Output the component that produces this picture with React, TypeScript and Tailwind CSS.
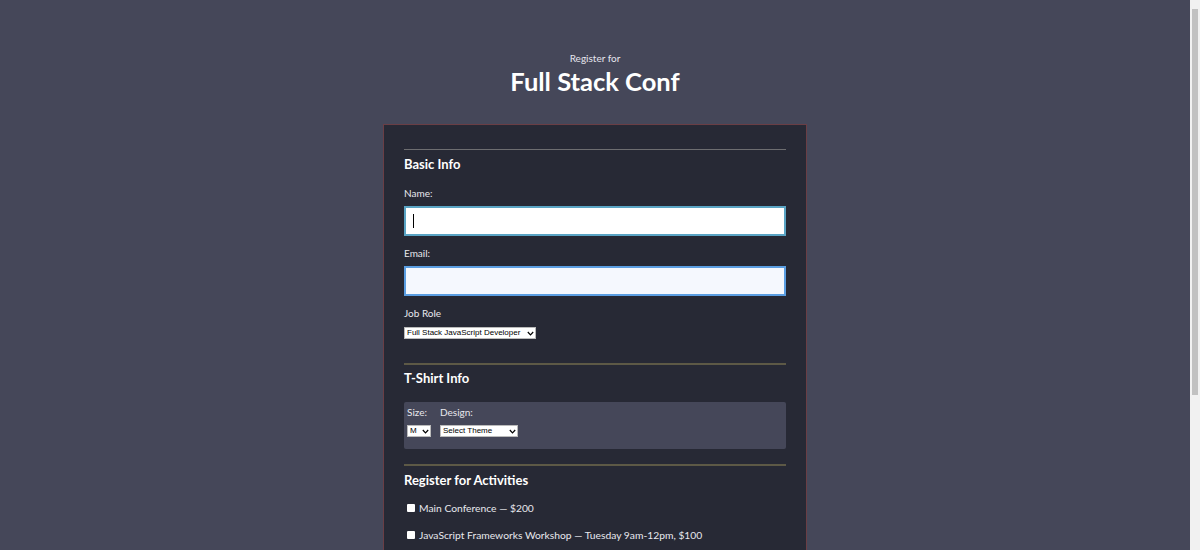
import React from "react";

const font = { fontFamily: "Lato, 'Noto Sans', sans-serif" };
const selFont = { fontFamily: "'Liberation Sans', Arial, sans-serif" };

function Chevron() {
  return (
    <svg width="7" height="5" viewBox="0 0 7 5">
      <path d="M0.8 1 L3.5 3.8 L6.2 1" fill="none" stroke="black" strokeWidth="1.2" />
    </svg>
  );
}

function Check({ children }: { children: React.ReactNode }) {
  return (
    <label className="flex items-center gap-[4px]">
      <span className="h-[8px] w-[8px] rounded-[1px] bg-white" />
      {children}
    </label>
  );
}

export default function App() {
  return (
    <div className="flex h-[550px] overflow-hidden bg-[#454759] text-white" style={font}>
      <main className="flex-1">
        <header className="flex flex-col items-center pt-[52px]">
          <p className="text-[10px] leading-[12px] text-[#e6e6ee]">Register for</p>
          <h1 className="mt-[3px] text-[25.5px] leading-[28px] font-bold">Full Stack Conf</h1>
        </header>
        <form className="mx-auto mt-[29px] w-[424px] border border-[#6a3e45] bg-[#272935] px-[20px] pt-[24px] pb-[40px]">
          <fieldset>
            <div className="h-px bg-[#6d6d70]" />
            <h2 className="mt-[6px] text-[13px] leading-[16px] font-bold">Basic Info</h2>
            <label className="mt-[15px] block text-[10px] leading-[12px] text-[#e8e8ee]">Name:</label>
            <div className="mt-[7px] flex h-[30px] items-center border-2 border-[#5aa4c4] bg-white px-[7px]">
              <span className="h-[14px] w-px bg-black" />
            </div>
            <label className="mt-[11px] block text-[10px] leading-[12px] text-[#e8e8ee]">Email:</label>
            <div className="mt-[7px] h-[30px] border-2 border-[#5b9ee2] bg-[#f5f8fe]" />
            <label className="mt-[11px] block text-[10px] leading-[12px] text-[#e8e8ee]">Job Role</label>
            <div
              className="mt-[8px] flex h-[12px] w-[132px] items-center justify-between border border-[#bbb] bg-white pl-[2px] pr-[1px] text-[8px] leading-[10px] text-black"
              style={selFont}
            >
              <span>Full Stack JavaScript Developer</span>
              <Chevron />
            </div>
          </fieldset>
          <fieldset className="mt-[24px]">
            <div className="h-[2px] bg-[#5d5946]" />
            <h2 className="mt-[5px] text-[13px] leading-[16px] font-bold">T-Shirt Info</h2>
            <div className="mt-[16px] flex h-[47px] gap-[9px] rounded-[2px] bg-[#454759] px-[3px] pt-[4px]">
              <div>
                <label className="block text-[10px] leading-[12px] text-[#e8e8ee]">Size:</label>
                <div
                  className="mt-[7px] flex h-[12px] w-[24px] items-center justify-between border border-[#bbb] bg-white pl-[2px] pr-[1px] text-[8px] leading-[10px] text-black"
                  style={selFont}
                >
                  <span>M</span>
                  <Chevron />
                </div>
              </div>
              <div>
                <label className="block text-[10px] leading-[12px] text-[#e8e8ee]">Design:</label>
                <div
                  className="mt-[7px] flex h-[12px] w-[78px] items-center justify-between border border-[#bbb] bg-white pl-[2px] pr-[1px] text-[8px] leading-[10px] text-black"
                  style={selFont}
                >
                  <span>Select Theme</span>
                  <Chevron />
                </div>
              </div>
            </div>
          </fieldset>
          <fieldset className="mt-[15px]">
            <div className="h-[2px] bg-[#5d5946]" />
            <h2 className="mt-[6px] text-[13px] leading-[16px] font-bold">Register for Activities</h2>
            <div className="mt-[14px] flex flex-col gap-[15px] pl-[3px] text-[10.3px] leading-[12px] text-[#e8e8ee]">
              <Check>Main Conference — $200</Check>
              <Check>JavaScript Frameworks Workshop — Tuesday 9am-12pm, $100</Check>
              <Check>JavaScript Libraries Workshop — Tuesday 1pm-4pm, $100</Check>
              <Check>Express Workshop — Tuesday 9am-12pm, $100</Check>
            </div>
          </fieldset>
        </form>
      </main>
      <aside className="flex w-[10px] shrink-0 flex-col bg-[#f1f1f1] px-[2px] pt-[9px]">
        <div className="h-[386px] w-full bg-[#c1c1c1]" />
      </aside>
    </div>
  );
}
